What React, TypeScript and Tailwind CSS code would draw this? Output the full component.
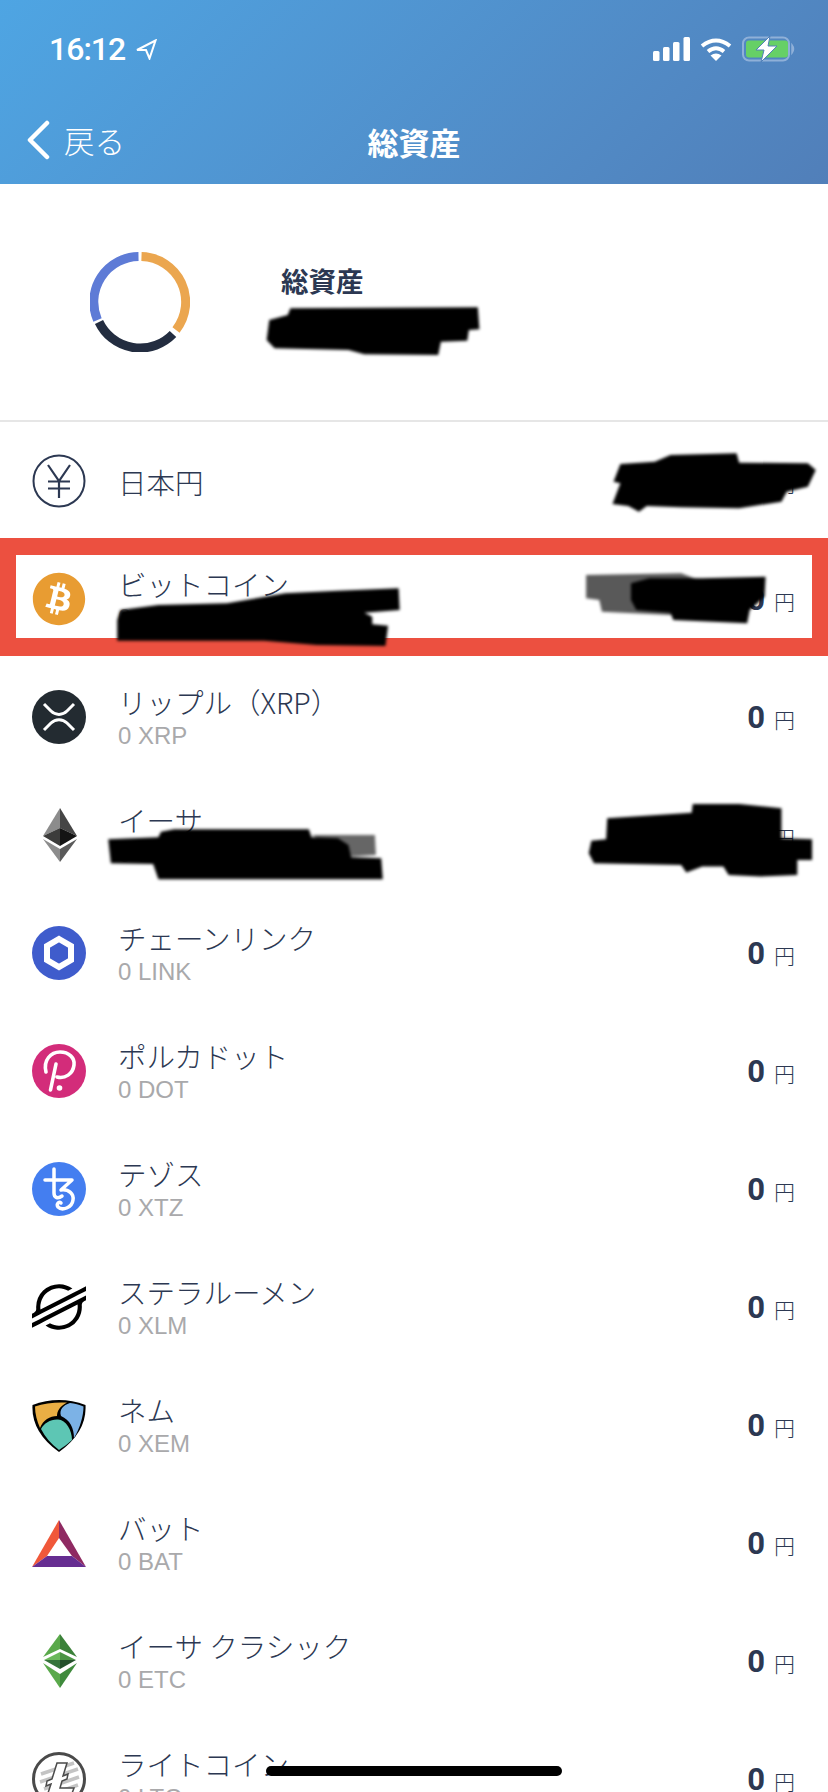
import { ReactNode } from 'react';
import { FaBitcoin } from 'react-icons/fa';
import { SiStellar } from 'react-icons/si';

interface Coin {
  name: string;
  sub?: string;
  icon: ReactNode;
}

function YenIcon() {
  return (
    <svg width="54" height="54" viewBox="0 0 54 54" fill="none" stroke="#2c3852" strokeWidth="2">
      <circle cx="27" cy="27" r="25.5" />
      <path d="M16 11 L27 27 L38 11 M27 27 V44 M16 27.5 H38 M16 34.5 H38" strokeWidth="2.2" />
    </svg>
  );
}

function XrpIcon() {
  return (
    <svg width="54" height="54" viewBox="0 0 54 54" fill="none">
      <circle cx="27" cy="27" r="27" fill="#232b31" />
      <path
        d="M12 14 L19 21 C23.5 25.5 30.5 25.5 35 21 L42 14 M12 40 L19 33 C23.5 28.5 30.5 28.5 35 33 L42 40"
        stroke="#fff"
        strokeWidth="3"
      />
    </svg>
  );
}

function EthIcon() {
  return (
    <svg width="54" height="54" viewBox="0 0 54 54">
      <polygon points="28,0 11,28 28,20" fill="#8c8c8c" />
      <polygon points="28,0 45,28 28,20" fill="#454545" />
      <polygon points="11,28 28,20 28,38" fill="#3c3c3b" />
      <polygon points="45,28 28,20 28,38" fill="#141414" />
      <polygon points="11,31 28,54 28,41" fill="#8c8c8c" />
      <polygon points="45,31 28,54 28,41" fill="#5a5a5a" />
    </svg>
  );
}

function LinkIcon() {
  return (
    <svg width="54" height="54" viewBox="0 0 54 54">
      <circle cx="27" cy="27" r="27" fill="#3f5ccc" />
      <polygon points="27,13 39,20 39,34 27,41 15,34 15,20" fill="#3f5ccc" stroke="#fff" strokeWidth="6" />
    </svg>
  );
}

function DotIcon() {
  return (
    <svg width="54" height="54" viewBox="0 0 54 54" fill="none">
      <circle cx="27" cy="27" r="27" fill="#d32c7a" />
      <path
        d="M14 28 C11 16 19 8 28 8 C37 8 43 14 42 21 C41 30 33 35 25 33 M24 20 L18.5 46"
        stroke="#fff"
        strokeWidth="3.6"
        strokeLinecap="round"
      />
      <circle cx="27.5" cy="44" r="2.8" fill="#fff" />
    </svg>
  );
}

function XtzIcon() {
  return (
    <svg width="54" height="54" viewBox="0 0 54 54" fill="none">
      <circle cx="27" cy="27" r="27" fill="#447ef0" />
      <path
        d="M22 7 V31 C22 36 26 37 30 34 M13 18 H40 L29 28 C37 27 42 32 41 38 C40 46 30 49 26 45 C24 42 27 39 29 41"
        stroke="#fff"
        strokeWidth="3.5"
        strokeLinecap="round"
        strokeLinejoin="round"
      />
    </svg>
  );
}

function NemIcon() {
  return (
    <svg width="54" height="54" viewBox="0 0 54 54">
      <path d="M0.5 7 Q27 -3 53.5 7 Q55 34 27 54 Q-1 34 0.5 7Z" fill="#000" />
      <path d="M3 8.5 C12 5 24 4 35 4.5 C28 8 25 13 25 18 C18 18 11 22 8 30 C5 23 3 16 3 8.5Z" fill="#eaae44" />
      <path d="M38 5 C43 5.5 47 6.5 51.5 8.5 C51.5 18 48 30 42 40 C42 30 38 22 29 18 C27 12 31 7 38 5Z" fill="#7cb2e6" />
      <path d="M9 31 C12 25 19 21 26 21.5 C34 22 40 32 40 42 C36 46 31 49 27 52 C19 46 13 39 9 31Z" fill="#5dc6b4" />
    </svg>
  );
}

function BatIcon() {
  return (
    <svg width="54" height="54" viewBox="0 0 54 54">
      <polygon points="27,4 27,22 15,40 0,51" fill="#f0583a" />
      <polygon points="27,4 54,51 40,40 27,22" fill="#8f2a62" />
      <polygon points="0,51 15,40 40,40 54,51" fill="#662d91" />
    </svg>
  );
}

function EtcIcon() {
  return (
    <svg width="54" height="54" viewBox="0 0 54 54">
      <polygon points="28,0 28,15 11,23" fill="#5aa94b" />
      <polygon points="28,0 45,23 28,15" fill="#3b8139" />
      <polygon points="12,26 28,18 28,26" fill="#6ab85a" />
      <polygon points="44,26 28,18 28,26" fill="#4b9444" />
      <polygon points="12,26 28,26 28,35" fill="#35743a" />
      <polygon points="44,26 28,26 28,35" fill="#24502b" />
      <polygon points="11,29 28,40 28,54" fill="#5aa94b" />
      <polygon points="45,29 28,40 28,54" fill="#3f8a3c" />
    </svg>
  );
}

function LtcIcon() {
  return (
    <svg width="54" height="54" viewBox="0 0 54 54" fill="none">
      <circle cx="27" cy="27" r="25.5" stroke="#4a4a4a" strokeWidth="3" />
      <path d="M9 22 L42 11 M8 30 L46 17 M12 37 L47 25 M18 43 L46 33" stroke="#c4c4c4" strokeWidth="3.5" />
      <polygon points="25,11 35,11 31,24 36,22 35,27 30,29 28,36 42,36 39,44 15,44 19,32 14,34 15,29 20,27" fill="#fff" stroke="#4a4a4a" strokeWidth="1.5" />
    </svg>
  );
}

const coins: Coin[] = [
  { name: '日本円', icon: <YenIcon /> },
  { name: 'ビットコイン', sub: '0 BTC', icon: <FaBitcoin size={54} color="#e89c32" /> },
  { name: 'リップル（XRP）', sub: '0 XRP', icon: <XrpIcon /> },
  { name: 'イーサ', sub: '0 ETH', icon: <EthIcon /> },
  { name: 'チェーンリンク', sub: '0 LINK', icon: <LinkIcon /> },
  { name: 'ポルカドット', sub: '0 DOT', icon: <DotIcon /> },
  { name: 'テゾス', sub: '0 XTZ', icon: <XtzIcon /> },
  { name: 'ステラルーメン', sub: '0 XLM', icon: <SiStellar size={54} color="#000" /> },
  { name: 'ネム', sub: '0 XEM', icon: <NemIcon /> },
  { name: 'バット', sub: '0 BAT', icon: <BatIcon /> },
  { name: 'イーサ クラシック', sub: '0 ETC', icon: <EtcIcon /> },
  { name: 'ライトコイン', sub: '0 LTC', icon: <LtcIcon /> },
];

function StatusIcons() {
  return (
    <div className="flex items-center gap-[9px]">
      <svg width="38" height="24" viewBox="0 0 38 24" fill="#fff">
        <rect x="0" y="14" width="6.5" height="10" rx="1.5" />
        <rect x="10" y="10" width="6.5" height="14" rx="1.5" />
        <rect x="20" y="5" width="6.5" height="19" rx="1.5" />
        <rect x="30.5" y="0" width="6.5" height="24" rx="1.5" />
      </svg>
      <svg width="32" height="24" viewBox="0 0 32 24" fill="none" stroke="#fff" strokeWidth="4">
        <path d="M2 9 Q16 -2 30 9" />
        <path d="M8 14.5 Q16 8 24 14.5" />
        <path d="M16 24 L10.5 18.5 Q16 14.5 21.5 18.5Z" fill="#fff" stroke="none" />
      </svg>
      <svg width="53" height="26" viewBox="0 0 53 26" className="ml-px">
        <rect x="1" y="1.5" width="46" height="23" rx="6" fill="none" stroke="#8fb0d8" strokeWidth="2" />
        <rect x="4" y="4.5" width="42" height="17" rx="3" fill="#66d066" />
        <path d="M50 9 Q53 13 50 17Z" fill="#8fb0d8" stroke="#8fb0d8" strokeWidth="1.5" />
        <polygon points="28,0 14,14 22,14 19,26 35,10 26,10" fill="#fff" stroke="#5080b8" strokeWidth="1" />
      </svg>
    </div>
  );
}

// 資産の内訳リング
function Donut() {
  return (
    <svg width="100" height="100" viewBox="0 0 100 100" fill="none" strokeWidth="9">
      <path d="M51.5 4.5 A45.5 45.5 0 0 1 86 78" stroke="#eba64f" />
      <path d="M83 82 A45.5 45.5 0 0 1 9 70" stroke="#232d40" />
      <path d="M7.5 68 A45.5 45.5 0 0 1 48.5 4.5" stroke="#5e7bd6" />
    </svg>
  );
}

// 黒塗り（手書きの塗りつぶし）
function Redactions() {
  return (
    <svg width="828" height="1792" viewBox="0 0 828 1792" className="absolute inset-0 pointer-events-none blur-[1.5px]">
      <g transform="scale(0.528 0.3333)">
        <polygon points="550,925 905,922 908,988 888,990 885,1022 835,1025 830,1065 690,1063 660,1050 520,1045 505,1020 510,960 545,945" />
      </g>
      <g transform="translate(0 430) scale(0.528 0.3333)">
        <polygon points="1240,95 1270,75 1395,70 1400,98 1530,100 1545,120 1530,170 1490,185 1480,215 1400,235 1290,232 1225,228 1210,245 1190,228 1160,222 1175,160 1162,155 1175,102" />
        <polygon points="430,520 540,490 640,482 755,475 757,540 690,548 705,560 705,583 735,587 730,648 600,645 500,632 222,632 222,570 228,540 300,525" />
        <polygon points="1110,435 1290,430 1340,460 1340,560 1140,545 1135,510 1110,505" opacity="0.65" />
        <polygon points="1195,460 1230,445 1330,445 1450,440 1448,500 1420,540 1415,580 1275,570 1270,548 1205,540 1195,510" />
        <polygon points="590,1215 710,1215 712,1275 665,1280" opacity="0.6" />
        <polygon points="205,1228 300,1222 305,1205 330,1198 585,1198 590,1222 640,1225 660,1245 665,1282 722,1285 725,1348 300,1348 290,1302 210,1300" />
        <polygon points="1150,1165 1310,1148 1312,1122 1400,1122 1480,1135 1480,1225 1538,1228 1538,1290 1510,1290 1510,1335 1440,1340 1380,1335 1370,1310 1330,1310 1300,1328 1290,1305 1125,1300 1115,1270 1120,1232 1148,1228" />
      </g>
    </svg>
  );
}

export default function App() {
  return (
    <div className="relative w-[828px] h-[1792px] overflow-hidden bg-white text-[#2c3852] font-['Noto_Sans_CJK_JP',sans-serif]">
      {/* Header */}
      <header className="h-[184px] bg-linear-135 from-[#4ea5e3] to-[#517fb9] text-white">
        <div className="h-[98px] flex items-center justify-between pl-[49px] pr-[33px]">
          <div className="flex items-center gap-[10px]">
            <span className="text-[32px] font-medium tracking-[-1px] font-['Roboto',sans-serif] leading-none">16:12</span>
            <svg width="22" height="21" viewBox="0 0 22 21" fill="none" stroke="#fff" strokeWidth="2">
              <polygon points="20.5,1.5 2,11 11,11 14.5,19.5" />
            </svg>
          </div>
          <StatusIcons />
        </div>
        <nav className="relative h-[86px] flex items-center justify-center">
          <div className="absolute left-[26px] top-[22px] flex items-center gap-[14px]">
            <svg width="24" height="40" viewBox="0 0 24 40" fill="none" stroke="#fff" strokeWidth="4.5" strokeLinecap="round" strokeLinejoin="round">
              <path d="M21 3 L4 20 L21 37" />
            </svg>
            <span className="text-[30.5px] font-light leading-none">戻る</span>
          </div>
          <h1 className="text-[31px] font-bold leading-none">総資産</h1>
        </nav>
      </header>

      {/* Summary */}
      <section className="h-[238px] border-b-2 border-[#e6e6e6] flex items-center pl-[90px]">
        <Donut />
        <div className="ml-[91px]">
          <p className="text-[27.5px] font-bold leading-[34px]">総資産</p>
          <p className="pl-[40px] pt-[4px] text-[22px] font-bold leading-[40px]">0 円</p>
        </div>
      </section>

      {/* Coin list */}
      <ul>
        {coins.map((coin, i) => (
          <li key={coin.name} className="relative h-[118px] flex items-center pl-[32px] pr-[33px]">
            {i === 1 && (
              <div className="absolute left-0 right-0 top-[-2px] h-[118px] border-x-[16px] border-t-[17px] border-b-[18px] border-[#ec5040]" />
            )}
            <div className="w-[54px] h-[54px] shrink-0 flex items-center justify-center">{coin.icon}</div>
            <div className="ml-[32px] flex-1">
              <p className="text-[28.5px] font-light leading-[37px]">{coin.name}</p>
              {coin.sub && (
                <p className="text-[24px] leading-[31px] text-[#a9a9ab] font-['Liberation_Sans',sans-serif]">{coin.sub}</p>
              )}
            </div>
            <div className="flex items-baseline gap-[9px] pt-[2px]">
              <span className="text-[31px] font-bold font-['Roboto',sans-serif]">0</span>
              <span className="text-[21px] font-light">円</span>
            </div>
          </li>
        ))}
      </ul>

      <Redactions />

      {/* Home indicator */}
      <div className="absolute left-[266px] top-[1766px] w-[296px] h-[10px] rounded-full bg-black" />
    </div>
  );
}
